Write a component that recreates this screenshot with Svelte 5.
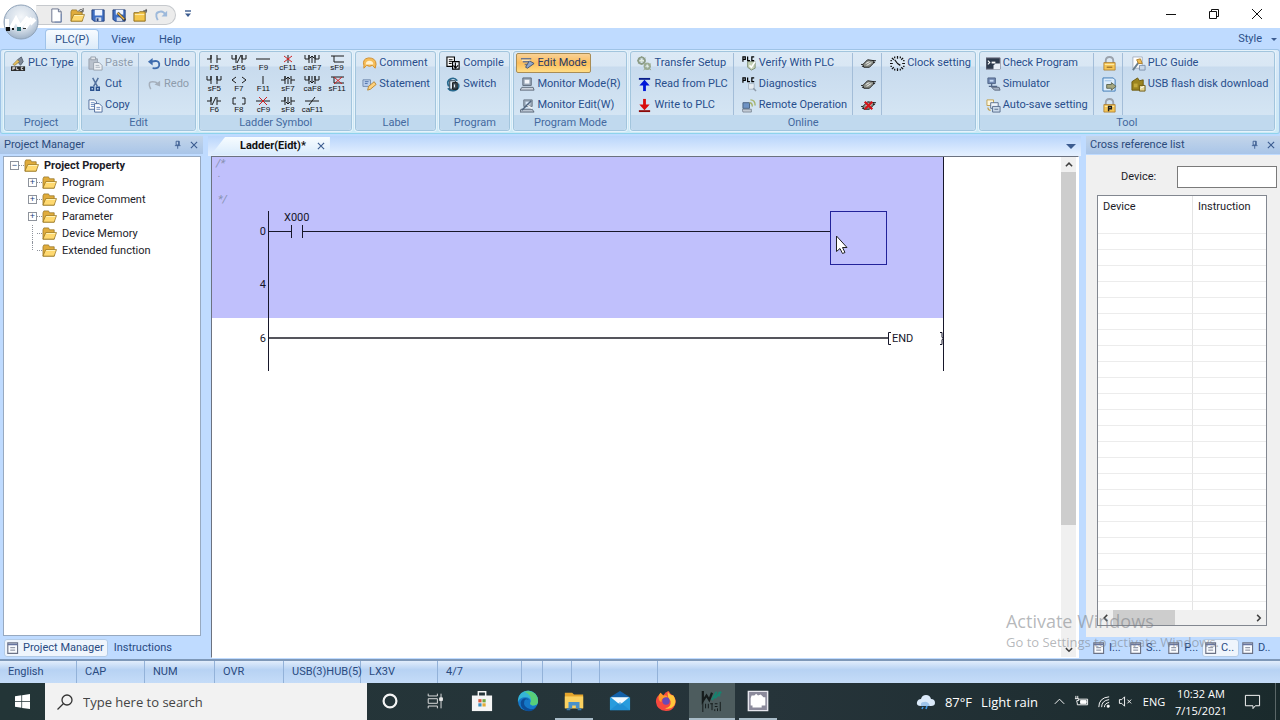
<script lang="ts">
  // Each icon is a list of [path, fill, stroke, stroke width] on a 16x16 grid
  type Shape = [string, string, string?, number?];

  const FOLDER: Shape[] = [
    ['M1 4V14H13V4H8L7 2H2Z', '#e0ac3c', '#8a6a1c', 0.7],
    ['M1 14L4 7H15.5L13 14Z', '#ffd970', '#8a6a1c', 0.7],
    ['M4.5 8H14', 'none', '#fff3bd', 1],
  ];
  const PLUG: Shape[] = [
    ['M0 9H3M1 11H4M12 5H16M12 7H15', 'none', '#222', 1],
    ['M2 9L7 4L14 5L13 8L9 12L3 12Z', '#8b8f88', '#1d1d1d', 1],
    ['M5 8L9 6M6 10L11 7', 'none', '#f2f2f2', 1],
  ];
  const LOCK: Shape[] = [
    ['M4 8V5Q4 1 8 1Q12 1 12 5V8', 'none', '#9ba3ad', 2],
    ['M2 7H14V15H2Z', '#f5c657', '#a5772a', 0.8],
    ['M3 9H13', 'none', '#ffeeb0', 1],
  ];

  const icons: Record<string, Shape[]> = {
    folder: FOLDER,
    newFile: [['M3 1H10L13 4V15H3Z', '#fff', '#66718c', 1], ['M10 1V4H13', '#d5dff0', '#66718c', 1], ['M13 6V15H6', 'none', '#6f87b4', 1]],
    open: [...FOLDER, ['M9 3Q12 0 14 3M14 0V4H11', 'none', '#555', 1]],
    save: [['M1 2H14V14H3L1 12Z', '#3f6fc4', '#233f7a', 1], ['M4 2H12V8H4Z', '#eef4ff'], ['M5 10H11V14H5Z', '#d3dcea'], ['M6 11H8V14H6Z', '#233f7a']],
    saveAs: [['M1 2H14V14H3L1 12Z', '#3f6fc4', '#233f7a', 1], ['M4 2H12V7H4Z', '#eef4ff'], ['M5 10H11V14H5Z', '#d3dcea'], ['M6 5L14 13', 'none', '#3c3c3c', 3], ['M6 5L13 12', 'none', '#f0b84a', 1.6]],
    project: [['M1 5H6L7 4H13V14H1Z', '#f4c64b', '#8a6a1c', 1], ['M2 7H12', 'none', '#fff0b5', 1], ['M11 3H15M14 1V5', 'none', '#444', 1]],
    redoBlue: [['M4 13Q0 5 6 4Q10 3 12 7', 'none', '#9db9db', 2], ['M14 3V9H8Z', '#9db9db']],
    plcType: [['M9 9L7 4L11 1L13 6L10 10', '#7d8796', '#55606f', 1], ['M2 9L7 4L9 6L4 10Z', '#e8c05c', '#7b6a35', 0.6], ['M0 11H15V16H0Z', '#2c2c2c'], ['M2 15V12H4V13.5H2M6 12V14.5H8M13 12H11V14.5H13', 'none', '#e8e8e8', 1]],
    paste: [['M1 3H10V14H1Z', '#b9c1cc', '#98a1ad', 1], ['M3 1H8V4H3Z', '#e3e6ea', '#98a1ad', 1], ['M6 7H12L15 10V15H6Z', '#eef1f5', '#98a1ad', 1], ['M8 10H12M8 12H13', 'none', '#a8b0bb', 1]],
    cut: [['M5 1L10 10M11 1L6 10', 'none', '#52719f', 1.6], ['M3 11H6V14H3ZM9 11H12V14H9Z', 'none', '#29518f', 1.6]],
    copy: [['M1 2H7L9 4V12H1Z', '#fff', '#4f6c9d', 1], ['M3 5H7M3 7H7M3 9H7', 'none', '#6888bd', 1], ['M7 6H12L15 9V15H7Z', '#fff', '#4f6c9d', 1], ['M9 10H13M9 12H13', 'none', '#6888bd', 1]],
    undo: [['M6 13Q14 14 13 8Q12 4 5 6', 'none', '#3e6cae', 2], ['M1 6L6 2V10Z', '#3e6cae']],
    redo: [['M4 13Q0 5 6 5Q10 5 11 7', 'none', '#a5afbb', 1.6], ['M14 4V10L8 8Z', '#a5afbb']],
    comment: [['M2 10Q0 3 7 2Q15 2 15 9L14 13L11 10Q8 12 5 10L2 13Z', '#f6bd58', '#d08d2b', 1], ['M4 9Q4 5 8 5Q12 5 12 9Z', '#fff1cf']],
    statement: [['M1 3H9V10H1Z', '#bcd0ec', '#7189ae', 1], ['M3 5H7M3 7H6', 'none', '#4b6ea8', 1], ['M6 14L7 10L13 5L15 8L9 13Z', '#ffd27d', '#b98833', 1]],
    compile: [['M1 1H9V11H1Z', '#fff', '#000', 1.2], ['M3 4H7M3 6H7M3 8H6', 'none', '#000', 1], ['M7 6H14V14H7Z', '#e8eef5', '#000', 1.2], ['M10 7V12M8 10L10 13L13 10', 'none', '#000', 1.2]],
    switch: [['M3 10Q0 4 5 2Q9 0 12 4M13 7Q15 12 10 14Q5 16 2 12', 'none', '#28698e', 1.8], ['M4 4H10V13H4Z', '#dfeaf5', '#1d3142', 1], ['M7 6H12V13H7Z', '#42505c', '#111', 1], ['M9 8V11', 'none', '#fff', 1]],
    edit: [['M1 3H12M3 6H10M5 9H9', 'none', '#6b7690', 1.6], ['M10 5L15 8L8 13L6 12Z', '#90a6c9', '#44536f', 1], ['M2 4.5H11', 'none', '#fff3cd', 1]],
    monitor: [['M3 1H12V9H3Z', '#9ba9b9', '#5c6979', 1], ['M5 3H10V7H5Z', '#f3f6fa'], ['M2 11H14L15 14H0Z', '#cdd4dd', '#5c6979', 1]],
    monitorEdit: [['M4 2H13V9H4Z', '#9ba9b9', '#6b7888', 1], ['M6 4H11V7H6Z', '#d9e8fa'], ['M1 12H13L15 15H0Z', '#bac5d2', '#5c6979', 1], ['M2 13L12 3', 'none', '#4f647e', 1.6], ['M8 8L13 11', 'none', '#f4f4f4', 1.4]],
    gears: [['M5 1.5A3.5 3.5 0 1 1 4.9 1.5', 'none', '#8c9c86', 2], ['M1 2L9 8M9 2L1 8M5 0V2M0 5H1', 'none', '#8c9c86', 1], ['M3 4H7V6H3Z', '#e4eee0'], ['M11 8A3 3 0 1 1 10.9 8', 'none', '#9aaa90', 2], ['M7 8L15 15M15 8L7 15', 'none', '#9aaa90', 1], ['M10 10H12V12H10Z', '#e4eee0']],
    readUp: [['M2 2H14', 'none', '#0a1e8c', 2], ['M8 15V6', 'none', '#0018d8', 3], ['M2.5 9L8 3L13.5 9Z', '#0018d8']],
    writeDown: [['M2 14H14', 'none', '#8c0a0a', 2], ['M8 1V9', 'none', '#d80c0c', 3], ['M2.5 7L8 13L13.5 7Z', '#d80c0c']],
    verify: [['M6 6H14V13L10 15L6 12Z', '#c5d2b7', '#7e8f76', 1], ['M8 10L10 12L14 6', 'none', '#fff', 1.6], ['M1 6V1H3.5V3.5H1M6 0.5V5H8.5M13 1H10.5V5H13', 'none', '#000', 1.3]],
    diagnose: [['M7 7H13V13H7Z', '#e4eaf0', '#a8b5c4', 1], ['M12 12L15 15', 'none', '#8f9cab', 1.6], ['M1 6V1H3.5V3.5H1M6 0.5V5H8.5M13 1H10.5V5H13', 'none', '#000', 1.3]],
    remote: [['M1 5H8V11H1Z', '#6e93c4', '#496282', 1], ['M0 12H10V15H1Z', '#c2cad4', '#66717f', 0.7], ['M8 5Q11 5 11 9M9 2Q14 2 14 8', 'none', '#a6b36c', 1.5]],
    plug: PLUG,
    plugOff: [...PLUG, ['M4 4L12 12M12 4L4 12', 'none', '#d4151b', 2.4]],
    clock: [['M8 0V3M8 13V16M0 8H3M13 8H16M2 2L4 4M12 12L14 14M14 2L12 4M2 14L4 12M5 0.5V2.5M11 0.5V2.5M5 13.5V15.5M11 13.5V15.5M0.5 5H2M14 5H15.5M0.5 11H2M14 11H15.5', 'none', '#111', 1.3], ['M8 8L5 4M8 8L11 10', 'none', '#111', 1.3]],
    check: [['M0 2H15V14H0Z', '#2e3a4c', '#778', 1], ['M2 5L4 7L2 9', 'none', '#fff', 1.2], ['M6 6H10V8H6Z', '#fff'], ['M10 8H15V14H8V10Z', '#e8eef6']],
    simulator: [['M2 1H10V7H2Z', '#7189b2', '#506587', 1], ['M4 3H8V5H4Z', '#c9dcf4'], ['M6 7V10M3 10H12', 'none', '#506587', 1.4], ['M6 11H14L15 14H9Z', '#a5b2c5', '#5e6b80', 1]],
    autosave: [['M1 2H8V8H1Z', '#fdf7df', '#c0a04e', 1], ['M5 5H13V11H5Z', '#eef4fb', '#5a6f8e', 1], ['M7 9H15V15H7Z', '#cbdaeb', '#5a6f8e', 1], ['M9 12H13', 'none', '#5a6f8e', 1], ['M2 10Q2 13 5 13', 'none', '#c0a04e', 1.2]],
    lock: [...LOCK, ['M5 12H11', 'none', '#a5772a', 1.5]],
    doc: [['M1 1H12L14 3V15H1Z', '#dcecfb', '#3c79b5', 1], ['M3 4H10', 'none', '#9ac0e4', 1], ['M5 8H10V6L15 10L10 14V12H5Z', '#a6a77f', '#5e6652', 1]],
    lockP: [...LOCK, ['M7 14V9H10V11.5H7', 'none', '#202020', 1.5]],
    guide: [['M2 1H12V13H2Z', '#fff', '#a5b0c0', 1], ['M2 15L8 7', 'none', '#6a7f8f', 2], ['M6 4L10 3L12 8L8 8Z', '#f0bb52', '#ad8230', 1], ['M9 10H15V15H9Z', '#c7d7e9', '#7f93ae', 1]],
    usb: [['M1 5L4 3L7 1L9 4L13 3V14H1Z', '#9b8420', '#6c5a12', 1], ['M3 7H7V11H3Z', '#c3aa3d'], ['M9 9H15V15H9Z', '#e2d493', '#6c5a12', 1], ['M10 12L14 10', 'none', '#fff', 1]],
    list: [['M1 1H13V14H1Z', '#fafcff', '#6b7285', 1.4], ['M1 3H13', 'none', '#6674a0', 2], ['M4 7H10M4 10H10', 'none', '#7b8294', 1.2]],
    pin: [['M5 2H10V8H5ZM3 9H12M7.5 9V14M9 2V8', 'none', '#3c5c90', 1.4]],
    close: [['M3 3L13 13M13 3L3 13', 'none', '#3c5c90', 1.8]],
    up: [['M3 10L8 5L13 10', 'none', '#404040', 2.4]],
    down: [['M3 5L8 10L13 5', 'none', '#404040', 2.4]],
    left: [['M10 3L5 8L10 13', 'none', '#404040', 2.4]],
    right: [['M5 3L10 8L5 13', 'none', '#404040', 2.4]],
  };

  const groups = [
    { name: 'Project', columns: [[['plcType', 'PLC Type']]] },
    { name: 'Edit', columns: [[['paste', 'Paste', 'off'], ['cut', 'Cut'], ['copy', 'Copy']], [['undo', 'Undo'], ['redo', 'Redo', 'off']]] },
    { name: 'Ladder Symbol', columns: [] },
    { name: 'Label', columns: [[['comment', 'Comment'], ['statement', 'Statement']]] },
    { name: 'Program', columns: [[['compile', 'Compile'], ['switch', 'Switch']]] },
    { name: 'Program Mode', columns: [[['edit', 'Edit Mode', 'on'], ['monitor', 'Monitor Mode(R)'], ['monitorEdit', 'Monitor Edit(W)']]] },
    {
      name: 'Online',
      columns: [
        [['gears', 'Transfer Setup'], ['readUp', 'Read from PLC'], ['writeDown', 'Write to PLC']],
        [['verify', 'Verify With PLC'], ['diagnose', 'Diagnostics'], ['remote', 'Remote Operation']],
        [['plug', ''], ['plug', ''], ['plugOff', '']],
        [['clock', 'Clock setting']],
      ],
    },
    {
      name: 'Tool',
      columns: [
        [['check', 'Check Program'], ['simulator', 'Simulator'], ['autosave', 'Auto-save setting']],
        [['lock', ''], ['doc', ''], ['lockP', '']],
        [['guide', 'PLC Guide'], ['usb', 'USB flash disk download']],
      ],
    },
  ];

  // Ladder symbols on an 18x8 strip: [shortcut, black strokes, red strokes]
  const symbols = [
    ['F5', 'M2 4H6V0V8M12 0V8M12 4H16', ''],
    ['sF6', 'M2 0V4H6V0V8M12 8V0V4H16V0M7 8L11 0', ''],
    ['F9', 'M2 4H16', ''],
    ['cF11', 'M9 0V8', 'M5 1L13 7M13 1L5 7'],
    ['caF7', 'M2 0V4H6V0V8M12 8V0V4H16V0M9 8V1M7 3L9 1L11 3', ''],
    ['sF9', 'M3 1H16M6 1V7H16', ''],
    ['sF5', 'M2 0V4H6V0V8M12 8V0V4H16V0', ''],
    ['F7', 'M6 1L2 4L6 7M12 1L16 4L12 7', ''],
    ['F11', 'M9 0V8', ''],
    ['sF7', 'M2 4H6V0V8M12 0V8M12 4H16M9 8V1M7 3L9 1L11 3', ''],
    ['caF8', 'M2 0V4H6V0V8M12 8V0V4H16V0M9 0V7M7 5L9 7L11 5', ''],
    ['sF11', 'M3 1H16M6 1V7H16', 'M6 1L14 8M14 1L6 8'],
    ['F6', 'M2 4H6V0V8M12 0V8M12 4H16M7 8L11 0', ''],
    ['F8', 'M6 1H3V7H6M12 1H15V7H12', ''],
    ['cF9', 'M2 4H16', 'M5 0L13 8M13 0L5 8'],
    ['sF8', 'M2 4H6V0V8M12 0V8M12 4H16M9 0V7M7 5L9 7L11 5', ''],
    ['caF11', 'M2 4H16M6 8L12 0', ''],
  ];

  const tree = [
    { name: 'Program', expandable: true },
    { name: 'Device Comment', expandable: true },
    { name: 'Parameter', expandable: true },
    { name: 'Device Memory', expandable: false },
    { name: 'Extended function', expandable: false },
  ];

  const status = ['English', 'CAP', 'NUM', 'OVR', 'USB(3)HUB(5)', 'LX3V', '4/7', '', '', '', '', ''];
  const emptyRows = Array(25).fill(0);
</script>

{#snippet icon(name: string)}
  <svg class="icon" viewBox="0 0 16 16" aria-hidden="true">
    {#each icons[name] as [d, fill, stroke, width]}
      <path {d} {fill} stroke={stroke ?? 'none'} stroke-width={width ?? 1} />
    {/each}
  </svg>
{/snippet}

<div class="app">
  <header class="titlebar">
    <button class="orb" aria-label="Application menu">
      <svg viewBox="0 0 36 36">
        <defs>
          <radialGradient id="orb" cx="50%" cy="35%" r="65%">
            <stop offset="0" stop-color="#f4f7fa" />
            <stop offset="0.6" stop-color="#d3dde8" />
            <stop offset="1" stop-color="#9fb2c8" />
          </radialGradient>
        </defs>
        <circle cx="18" cy="18" r="17" fill="url(#orb)" stroke="#8fa2b8" />
        <path d="M4 15V23M8 24L13 15L17 23L25 13M22 24L29 14M27 20L32 15" fill="none" stroke="#fff" stroke-width="4" />
        <path d="M3 23H7V27H3ZM9 24H11V26H9Z" fill="#111" />
        <path d="M14 23H18V27H14Z" fill="#2f6d77" />
        <path d="M20 24H23V25H20Z" fill="#333" />
      </svg>
    </button>
    <div class="quick">
      {#each ['newFile', 'open', 'save', 'saveAs', 'project', 'redoBlue'] as name}
        <button aria-label={name}>{@render icon(name)}</button>
      {/each}
    </div>
    <button class="customize" aria-label="Customize toolbar">
      <svg viewBox="0 0 8 8"><path d="M1 1H7" stroke="#3c5c90" stroke-width="1.4" /><path d="M1 3.5H7L4 7Z" fill="#3c5c90" /></svg>
    </button>
    <div class="window-buttons">
      <button aria-label="Minimize"><svg viewBox="0 0 12 12"><path d="M1 6.5H11" /></svg></button>
      <button aria-label="Restore"><svg viewBox="0 0 12 12"><path d="M1.5 3.5H8.5V10.5H1.5ZM3.5 3V1.5H10.5V8.5H9" /></svg></button>
      <button aria-label="Close"><svg viewBox="0 0 12 12"><path d="M1 1L11 11M11 1L1 11" /></svg></button>
    </div>
  </header>

  <nav class="tabs">
    <button class="tab active">PLC(P)</button>
    <button class="tab">View</button>
    <button class="tab">Help</button>
    <button class="style-menu">Style <span class="caret"></span></button>
  </nav>

  <div class="ribbon">
    {#each groups as group}
      <section class="group">
        <div class="group-body">
          {#if group.name === 'Ladder Symbol'}
            <div class="symbols">
              {#each symbols as [key, black, red]}
                <button class="symbol">
                  <svg viewBox="0 0 18 8" aria-hidden="true">
                    <path d={black} fill="none" stroke="#1a1a1a" />
                    {#if red}<path d={red} fill="none" stroke="#d02020" />{/if}
                  </svg>
                  <span>{key}</span>
                </button>
              {/each}
            </div>
          {:else}
            {#each group.columns as column}
              <div class="column">
                {#each column as [name, label, state]}
                  <button class="command" class:on={state === 'on'} disabled={state === 'off'} aria-label={label || name}>
                    {@render icon(name)}{#if label}<span>{label}</span>{/if}
                  </button>
                {/each}
              </div>
            {/each}
          {/if}
        </div>
        <div class="group-name">{group.name}</div>
      </section>
    {/each}
  </div>

  <main class="workspace">
    <aside class="panel project">
      <div class="panel-head">
        <span>Project Manager</span>
        <button aria-label="Pin">{@render icon('pin')}</button>
        <button aria-label="Close">{@render icon('close')}</button>
      </div>
      <div class="tree">
        <div class="node root"><span class="toggle">−</span><span class="dots"></span>{@render icon('folder')}<strong>Project Property</strong></div>
        <ul>
          {#each tree as node}
            <li class="node">
              {#if node.expandable}<span class="toggle">+</span>{:else}<span class="no-toggle"></span>{/if}
              <span class="dots"></span>{@render icon('folder')}<span>{node.name}</span>
            </li>
          {/each}
        </ul>
      </div>
      <div class="panel-tabs">
        <button class="panel-tab active">{@render icon('list')}Project Manager</button>
        <button class="panel-tab plain">Instructions</button>
      </div>
    </aside>

    <section class="editor">
      <div class="doc-tabs">
        <div class="doc-tab">
          <strong>Ladder(Eidt)*</strong>
          <button aria-label="Close tab">{@render icon('close')}</button>
        </div>
        <button class="doc-menu" aria-label="Open documents"><span class="caret big"></span></button>
      </div>
      <div class="editor-frame">
        <div class="canvas">
          <svg class="ladder" width="740" height="220" viewBox="0 0 740 220">
            <rect width="731" height="161" fill="#c0c0fc" />
            <g class="note">
              <text x="4" y="10">/*</text>
              <text x="6" y="20">.</text>
              <text x="6" y="46">*/</text>
            </g>
            <g class="wire">
              <path d="M56.5 54V214M731.5 0V214" />
              <path d="M57 74.5H79M79.5 68V81M90.5 68V81M91 74.5H618" />
              <path class="end" d="M57 181H676" />
              <path d="M679 175.5H676.5V187.5H679M728 175.5H730V180L731 181.5L730 183V187.5H728" />
            </g>
            <rect class="cursor-cell" x="618.5" y="54.5" width="56" height="53" />
            <text x="72" y="64">X000</text>
            <g text-anchor="end">
              <text x="54" y="78">0</text>
              <text x="54" y="131">4</text>
              <text x="54" y="185">6</text>
            </g>
            <text x="680" y="185">END</text>
            <path d="M624.5 79V94.5L628 91.5L630.5 96.5L633 95.5L630.5 90.5H635Z" fill="#fff" stroke="#222" />
          </svg>
        </div>
        <div class="scroll-v">
          <button aria-label="Scroll up">{@render icon('up')}</button>
          <div class="track"><div class="thumb"></div></div>
          <button aria-label="Scroll down">{@render icon('down')}</button>
        </div>
      </div>
    </section>

    <aside class="panel reference">
      <div class="panel-head">
        <span>Cross reference list</span>
        <button aria-label="Pin">{@render icon('pin')}</button>
        <button aria-label="Close">{@render icon('close')}</button>
      </div>
      <div class="reference-body">
        <div class="field">
          <label for="device">Device:</label>
          <input id="device" type="text" />
        </div>
        <div class="grid-frame">
          <div class="grid-view">
            <table>
              <thead>
                <tr><th>Device</th><th>Instruction</th></tr>
              </thead>
              <tbody>
                {#each emptyRows as _}
                  <tr><td></td><td></td></tr>
                {/each}
              </tbody>
            </table>
          </div>
          <div class="scroll-h">
            <button aria-label="Scroll left">{@render icon('left')}</button>
            <div class="track"><div class="thumb"></div></div>
            <button aria-label="Scroll right">{@render icon('right')}</button>
          </div>
        </div>
      </div>
      <div class="panel-tabs">
        {#each ['I...', 'S...', 'P...', 'C..', 'D..'] as name}
          <button class="panel-tab" class:active={name === 'C..'}>{@render icon('list')}{name}</button>
        {/each}
      </div>
    </aside>
  </main>

  <footer class="status">
    {#each status as cell}
      <span>{cell}</span>
    {/each}
  </footer>

  <div class="taskbar">
    <button class="start" aria-label="Start">
      <svg viewBox="0 0 16 16"><path d="M0 2.3L6.8 1.3V7.5H0ZM7.6 1.2L16 0V7.5H7.6ZM0 8.3H6.8V14.6L0 13.7ZM7.6 8.3H16V16L7.6 14.8Z" fill="#fff" /></svg>
    </button>
    <label class="search">
      <svg viewBox="0 0 18 18"><circle cx="11" cy="7" r="5" /><path d="M7.5 10.5L1.5 16.5" /></svg>
      <input type="text" placeholder="Type here to search" />
    </label>
    <button class="app-button" aria-label="Cortana">
      <svg viewBox="0 0 24 24"><circle cx="12" cy="12" r="7" fill="none" stroke="#f4f4f4" stroke-width="2.4" /></svg>
    </button>
    <button class="app-button" aria-label="Task view">
      <svg viewBox="0 0 24 24" fill="none" stroke="#e8e8e8"><path d="M3.5 4V6.5H13.5V4M3.5 9.5H13.5V14.5H3.5ZM3.5 20V17.5H13.5V20M17.5 4V20" /><path d="M16 8.5H19V11.5H16Z" fill="#e8e8e8" /></svg>
    </button>
    <button class="app-button" aria-label="Microsoft Store">
      <svg viewBox="0 0 24 24"><path d="M8 7V2H16V7" fill="none" stroke="#f5f5f5" stroke-width="1.6" /><path d="M1 6H23V23H1Z" fill="#f5f5f5" /><path d="M8 10H11.5V13.5H8Z" fill="#d9573b" /><path d="M12.5 10H16V13.5H12.5Z" fill="#6fa644" /><path d="M8 14.5H11.5V18H8Z" fill="#3b8fc2" /><path d="M12.5 14.5H16V18H12.5Z" fill="#e2ac38" /></svg>
    </button>
    <button class="app-button" aria-label="Edge">
      <svg viewBox="0 0 24 24"><circle cx="12" cy="12" r="11" fill="#1578c8" /><path d="M1 11A11 11 0 0 1 23 12Q23 17 17 17Q13 16 15 13Q15 8 9 8Q3 8 1 13Z" fill="#35b5d5" /><path d="M8 2A11 11 0 0 1 23 12Q23 17 17 17Q13 16 15 13Q17 6 8 2Z" fill="#58cf78" /><path d="M8 12Q6 19 15 21Q19 21 21 18Q18 24 11 23Q4 21 4 14Q5 9 9 9Q12 9 13 11Q9 9 8 12Z" fill="#0c4d97" /></svg>
    </button>
    <button class="app-button running" aria-label="File Explorer">
      <svg viewBox="0 0 24 24"><path d="M2 3H10L12 5H22V20H2Z" fill="#e5a52c" /><path d="M2 7H22V20H2Z" fill="#fbd160" /><path d="M6 20V13H18V20H14V17H10V20Z" fill="#4a91c9" /><path d="M4 20H8V22H4ZM16 20H20V22H16Z" fill="#3779b0" /></svg>
    </button>
    <button class="app-button" aria-label="Mail">
      <svg viewBox="0 0 24 24"><path d="M1 8L12 1L23 8Z" fill="#1260a8" /><path d="M1 8H23V22H1Z" fill="#289cdd" /><path d="M2 8H22L12 16Z" fill="#f2f9ff" /><path d="M1 22L12 13L23 22Z" fill="#1b87ce" opacity="0.6" /></svg>
    </button>
    <button class="app-button" aria-label="Firefox">
      <svg viewBox="0 0 24 24"><path d="M4 6L6 3L9 6Q11 2 15 1Q16 4 20 6Q24 11 22 16Q19 23 12 23Q2 22 1 13Q1 8 4 6Z" fill="#f5483f" /><path d="M14 1Q15 5 20 6Q24 12 21 17Q17 22 11 20Q18 19 17 12Q13 8 14 1Z" fill="#ffc63a" /><path d="M4 6L6 3L9 6Q13 5 14 8L10 9Q7 9 7 13Q3 12 4 6Z" fill="#ff9a2b" /><circle cx="12" cy="12" r="4" fill="#6949b7" /></svg>
    </button>
    <button class="app-button current" aria-label="PLC Editor">
      <svg viewBox="0 0 24 24" fill="none"><path d="M2 1V12L6 6L9 11L12 3" stroke="#151b1b" stroke-width="2.4" /><path d="M12 11L17 2M15 9L22 2M20 2V7" stroke="#18826f" stroke-width="2.2" /><path d="M2 13V24M5 15V20M8 15V20M10 15H13M12 15V22M15 15H18M15 18H18M21 13V23M15 21V23M18 20V23" stroke="#101616" /></svg>
    </button>
    <button class="app-button running" aria-label="Screen recorder">
      <svg viewBox="0 0 24 24"><path d="M1.5 1.5H22.5V22.5H1.5Z" fill="#8b8a9b" stroke="#e7e7ee" stroke-width="1.6" /><path d="M5 6H8L10 4L12 6L15 5L18 8H20V17H16V19H6V17H4V9Z" fill="#fff" /></svg>
    </button>

    <div class="tray">
      <button class="weather">
        <svg viewBox="0 0 20 16"><path d="M5 12Q0 12 1 8Q2 5 5 5Q6 1 10 1Q14 1 15 5Q19 5 19 9Q19 12 15 12Z" fill="#dbeafa" /><path d="M5 12Q4 8 8 8Q12 7 14 12Z" fill="#9fc4ea" /><path d="M7 13L6 15M11 12L10 15" stroke="#3f97e6" stroke-width="1.6" /></svg>
        <span>87°F</span><span>Light rain</span>
      </button>
      <button aria-label="Hidden icons"><svg viewBox="0 0 16 16"><path d="M3 10.5L8 5.5L13 10.5" /></svg></button>
      <button aria-label="Battery"><svg viewBox="0 0 16 16"><path d="M5.5 5.5H14.5V11.5H3.5V9M2 2V5M4 2V5M1 5H5V7H3V9" /><path d="M7 7H13V10H7Z" fill="#fff" /></svg></button>
      <button aria-label="Network"><svg viewBox="0 0 16 16"><path d="M3 14Q3 4 14 3M6 14Q6 7 14 6M9 14Q9 10 14 9" /><path d="M12 12H14V14H12Z" fill="#fff" /></svg></button>
      <button aria-label="Volume"><svg viewBox="0 0 16 16"><path d="M1.5 6H4L7 3V13L4 10H1.5ZM10 6L14 10M14 6L10 10" /></svg></button>
      <button class="lang">ENG</button>
      <button class="clock"><span>10:32 AM</span><span>7/15/2021</span></button>
      <button class="notices" aria-label="Notifications"><svg viewBox="0 0 18 18"><path d="M1.5 2.5H16.5V13.5H12L9.5 16.5V13.5H1.5Z" /></svg></button>
    </div>
  </div>

  <div class="watermark">
    <div class="large">Activate Windows</div>
    <div>Go to Settings to activate Windows.</div>
  </div>
</div>

<style>
  :global(body) {
    margin: 0;
  }

  .app {
    position: relative;
    display: flex;
    flex-direction: column;
    min-height: 100vh;
    overflow: hidden;
    font: 11px/16px Roboto, 'Open Sans', sans-serif;
    color: #1c1c28;
    background: #bfdbff;
  }

  button {
    display: flex;
    align-items: center;
    padding: 0;
    border: 0;
    background: none;
    font: inherit;
    color: inherit;
    white-space: nowrap;
  }

  svg {
    display: block;
    flex: none;
  }

  .icon {
    width: 15px;
    height: 15px;
  }

  /* Title bar */
  .titlebar {
    position: relative;
    display: flex;
    align-items: center;
    height: 28px;
    background: #fff;
  }

  .orb {
    position: absolute;
    z-index: 2;
    left: 3px;
    top: 4px;
  }

  .orb svg {
    width: 36px;
    height: 36px;
  }

  .quick {
    display: flex;
    align-items: center;
    gap: 6px;
    height: 18px;
    margin: 2px 0 0 36px;
    padding: 0 6px 0 12px;
    border: 1px solid #c6c9cd;
    border-left-color: transparent;
    border-radius: 0 10px 10px 0;
    background: #ececec;
  }

  .customize {
    margin-left: 8px;
  }

  .customize svg {
    width: 8px;
    height: 8px;
  }

  .window-buttons {
    display: flex;
    margin-left: auto;
    padding-right: 2px;
  }

  .window-buttons button {
    justify-content: center;
    width: 43px;
    height: 28px;
  }

  .window-buttons svg {
    width: 12px;
    height: 12px;
    fill: none;
    stroke: #111;
  }

  /* Ribbon */
  .tabs {
    display: flex;
    align-items: flex-end;
    height: 21px;
    padding-left: 45px;
    color: #2c5089;
  }

  .tab {
    height: 20px;
    padding: 0 11px;
    border: 1px solid transparent;
    border-bottom: 0;
  }

  .tab.active {
    padding: 0 9px;
    border-color: #9fc3ea;
    border-radius: 4px 4px 0 0;
    background: linear-gradient(#f7fbff, #dcebf9);
  }

  .style-menu {
    gap: 9px;
    height: 20px;
    margin-left: auto;
    padding-right: 3px;
  }

  .caret {
    border: 3px solid transparent;
    border-top-color: #3c5c90;
    border-bottom: 0;
  }

  .caret.big {
    border-width: 5px 5px 0;
  }

  .ribbon {
    display: grid;
    grid-template-columns: 74fr 115fr 153fr 81fr 71fr 114fr 345fr 296fr;
    gap: 3px;
    padding: 1px 4px 2px 3px;
    border: 1px solid #9fc3e6;
    border-bottom-color: #8ed3ec;
    border-radius: 3px;
    background: linear-gradient(#dcebf8, #d2e6f6 40%, #cbeaf6);
  }

  .group {
    display: flex;
    flex-direction: column;
    min-width: 0;
    border: 1px solid #a2c5dd;
    border-radius: 3px;
    background: linear-gradient(#dce9f5 0, #d9e7f4 14px, #c8dbee 15px, #d8e8f5 100%);
    box-shadow: 0 0 0 1px #e6f3fb;
  }

  .group-body {
    display: flex;
    box-sizing: border-box;
    height: 63px;
    padding: 1px 2px 0;
    color: #284e8c;
  }

  .column {
    display: flex;
    flex-direction: column;
    align-items: flex-start;
    gap: 1px;
  }

  .column + .column {
    margin-left: 1px;
    padding-left: 4px;
    border-left: 1px solid #a3bdd8;
  }

  .command {
    gap: 2px;
    box-sizing: border-box;
    height: 20px;
    padding: 0 3px;
    border: 1px solid transparent;
  }

  .command:disabled {
    color: #8e9cac;
  }

  .command.on {
    border-color: #a98d55;
    border-radius: 2px;
    background: linear-gradient(#f9d196, #fbbd5c 50%, #ffdd85);
    color: #2b3b64;
  }

  .symbols {
    display: grid;
    grid-template-columns: repeat(6, 1fr);
    grid-auto-rows: 20px;
    row-gap: 1px;
    flex: 1;
  }

  .symbol {
    flex-direction: column;
    justify-content: center;
    color: #111;
    font: 8px/9px 'Liberation Sans', sans-serif;
  }

  .symbol svg {
    width: 18px;
    height: 8px;
  }

  .group-name {
    height: 15px;
    line-height: 15px;
    border-radius: 0 0 3px 3px;
    background: #c0d9ee;
    color: #44699f;
    text-align: center;
  }

  /* Docked panels */
  .workspace {
    display: flex;
    flex: 1;
    gap: 5px;
    padding-top: 2px;
    border-bottom: 2px solid #7e98b8;
  }

  .panel {
    display: flex;
    flex-direction: column;
  }

  .panel-head {
    display: flex;
    align-items: center;
    gap: 6px;
    height: 18px;
    padding: 0 4px;
    background: linear-gradient(#c3d5ea, #a9c5e8);
    color: #2c4b7c;
  }

  .panel-head span {
    margin-right: auto;
  }

  .panel-head .icon {
    width: 10px;
    height: 10px;
  }

  .project {
    width: 203px;
  }

  .tree {
    flex: 1;
    margin: 2px 2px 1px 3px;
    padding-left: 6px;
    border: 1px solid #97a9c0;
    background: #fff;
  }

  .tree ul {
    margin: 0;
    padding: 0 0 0 18px;
    list-style: none;
  }

  .node {
    display: flex;
    align-items: center;
    height: 17px;
  }

  .node .icon {
    margin-right: 5px;
  }

  .toggle {
    box-sizing: border-box;
    width: 9px;
    height: 9px;
    border: 1px solid #8e939c;
    color: #23437c;
    font: 9px/7px 'Liberation Sans', sans-serif;
    text-align: center;
  }

  .no-toggle {
    width: 4px;
    height: 17px;
    margin-left: 4px;
    border-left: 1px dotted #8e939c;
  }

  .node:last-child .no-toggle {
    height: 8px;
    margin-bottom: 9px;
  }

  .dots {
    width: 5px;
    border-top: 1px dotted #8e939c;
  }

  .panel-tabs {
    display: flex;
    align-items: center;
    height: 22px;
    padding-left: 4px;
    color: #284a82;
  }

  .panel-tab {
    gap: 3px;
    height: 18px;
    padding: 0 3px 0 2px;
    border: 1px solid transparent;
  }

  .panel-tab .icon {
    width: 13px;
    height: 13px;
  }

  .panel-tab.plain {
    margin-left: 3px;
  }

  .panel-tab.active {
    border-color: #b3cbe6;
    border-radius: 3px;
    background: #eff5fc;
  }

  /* Ladder editor */
  .editor {
    display: flex;
    flex: 1;
    flex-direction: column;
    min-width: 0;
  }

  .doc-tabs {
    display: flex;
    align-items: center;
    justify-content: space-between;
    height: 20px;
    padding: 0 5px 0 3px;
    background: linear-gradient(#b9d5fb, #e6f1ff);
  }

  .doc-tab {
    display: flex;
    align-items: center;
    gap: 10px;
    height: 18px;
    padding: 0 4px 0 29px;
    background: linear-gradient(#f7fcff, #d9ebfc);
    clip-path: polygon(0 100%, 14px 0, 100% 0, 100% 100%);
    color: #111;
  }

  .doc-tab .icon {
    width: 10px;
    height: 10px;
  }

  .doc-menu {
    height: 20px;
  }

  .editor-frame {
    display: flex;
    flex: 1;
    margin: 0 2px 1px 3px;
    padding-right: 2px;
    border: 1px solid #fff;
    border-top-color: #6b7280;
    border-left-color: #6b7280;
    background: #fff;
  }

  .canvas {
    flex: 1;
    min-width: 0;
    overflow: hidden;
  }

  .ladder text {
    fill: #16162a;
    font: 11px Roboto, sans-serif;
  }

  .ladder .note text {
    fill: #8791b0;
    font-style: italic;
  }

  .wire path {
    fill: none;
    stroke: #17172a;
  }

  .wire .end {
    stroke: #55555c;
    stroke-width: 2;
  }

  .cursor-cell {
    fill: none;
    stroke: #22229a;
  }

  .scroll-v {
    display: flex;
    flex-direction: column;
    width: 15px;
    background: #f0f0f0;
  }

  .scroll-v button,
  .scroll-h button {
    justify-content: center;
    width: 15px;
    height: 15px;
  }

  .scroll-v .icon,
  .scroll-h .icon {
    width: 10px;
    height: 10px;
  }

  .track {
    flex: 1;
  }

  .thumb {
    background: #cdcdcd;
  }

  .scroll-v .thumb {
    height: 75%;
  }

  /* Cross reference */
  .reference {
    width: 194px;
  }

  .reference-body {
    display: flex;
    flex: 1;
    flex-direction: column;
    margin-top: 1px;
    padding: 11px 3px 11px 11px;
    background: #f0f0f0;
  }

  .field {
    display: flex;
    align-items: center;
    margin-bottom: 7px;
  }

  .field label {
    width: 56px;
    padding-left: 24px;
  }

  .field input {
    box-sizing: border-box;
    flex: 1;
    min-width: 0;
    height: 22px;
    border: 1px solid #7a7a7a;
    background: #fff;
    font: inherit;
  }

  .grid-frame {
    display: flex;
    flex: 1;
    flex-direction: column;
    margin-right: 10px;
    border: 1px solid #828790;
    background: #fff;
  }

  /* The empty rows run on below the visible part of the list */
  .grid-view {
    flex: 1 0 0;
    min-height: 0;
    overflow: hidden;
  }

  table {
    width: 100%;
    table-layout: fixed;
    border-collapse: separate;
    border-spacing: 0;
  }

  th {
    height: 22px;
    padding: 0 5px;
    font-weight: 400;
    text-align: left;
  }

  td {
    height: 15px;
    padding: 0;
    border-bottom: 1px solid #ececec;
  }

  th:first-child {
    width: 84px;
  }

  th:first-child,
  td:first-child {
    border-right: 1px solid #e4e4e4;
  }

  .scroll-h {
    display: flex;
    background: #f0f0f0;
  }

  .scroll-h .thumb {
    width: 45%;
    height: 15px;
  }

  .reference .panel-tabs {
    display: grid;
    grid-template-columns: repeat(5, 1fr);
    padding-right: 4px;
  }

  /* Status bar */
  .status {
    display: grid;
    grid-template-columns: 77px 68px 70px 69px 77px 77px 84px 21px 29px 28px 58px 1fr;
    height: 22px;
    background: linear-gradient(#e1edfc, #b7d2f3 40%, #c5dcf8);
    color: #2a4a80;
  }

  .status span {
    padding: 3px 0 0 8px;
    border-right: 1px solid #93b2d9;
    white-space: nowrap;
  }

  .status span:last-child {
    border-right: 0;
  }

  /* Taskbar */
  .taskbar {
    display: flex;
    height: 37px;
    background: linear-gradient(90deg, #233537, #26343a 60%, #1a2a2c);
    color: #fff;
    font-family: 'Open Sans', 'Noto Sans', sans-serif;
  }

  .start {
    justify-content: center;
    width: 45px;
  }

  .start svg {
    width: 15px;
    height: 15px;
  }

  .search {
    display: flex;
    align-items: center;
    gap: 9px;
    box-sizing: border-box;
    width: 322px;
    padding-left: 11px;
    background: #f2f2f2;
  }

  .search svg {
    width: 18px;
    height: 18px;
    fill: none;
    stroke: #333;
    stroke-width: 1.3;
  }

  .search input {
    flex: 1;
    min-width: 0;
    padding: 0;
    border: 0;
    background: none;
    font: inherit;
    font-size: 13px;
    line-height: 20px;
  }

  .search input::placeholder {
    color: #444;
  }

  .app-button {
    justify-content: center;
    box-sizing: border-box;
    width: 46px;
    border-bottom: 2px solid transparent;
    background-clip: padding-box;
  }

  .app-button svg {
    width: 22px;
    height: 22px;
  }

  .running {
    border-image: linear-gradient(90deg, transparent 10%, #a9bcc8 10%, #a9bcc8 90%, transparent 90%) 1;
    border-top: 0;
    border-left: 0;
    border-right: 0;
  }

  .current {
    border-bottom-color: #a9bcc8;
    background: #4d5c5e;
  }

  .tray {
    display: flex;
    align-items: center;
    margin-left: auto;
    padding-right: 4px;
  }

  .tray button {
    justify-content: center;
    width: 22px;
    height: 37px;
  }

  .tray svg {
    width: 15px;
    height: 15px;
    fill: none;
    stroke: #fff;
  }

  .tray .weather {
    gap: 9px;
    width: auto;
    padding-right: 10px;
    font-size: 13px;
  }

  .tray .weather svg {
    width: 20px;
    height: 16px;
    stroke: none;
  }

  .tray .lang {
    width: 36px;
  }

  .tray .clock {
    flex-direction: column;
    width: 58px;
    line-height: 17px;
  }

  .tray .notices {
    width: 46px;
    border-right: 1px solid #5b6768;
  }

  .tray .notices svg {
    width: 17px;
    height: 17px;
  }

  /* Activation notice, drawn over everything else */
  .watermark {
    position: absolute;
    right: 61px;
    bottom: 68px;
    color: rgba(120, 124, 130, 0.55);
    font: 13px/19px 'Open Sans', 'Noto Sans', sans-serif;
    pointer-events: none;
  }

  .watermark .large {
    font-size: 18px;
    line-height: 24px;
  }
</style>
